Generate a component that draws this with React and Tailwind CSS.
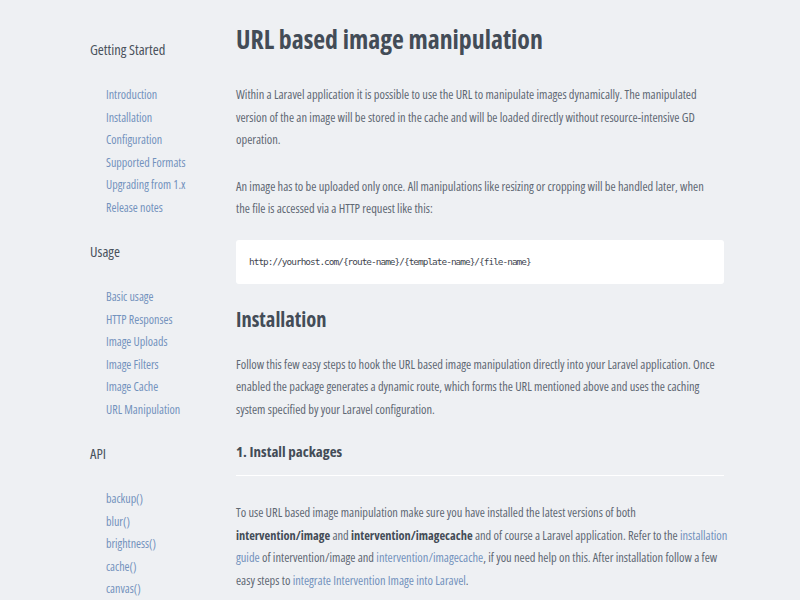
import React from "react";

const nav = [
  {
    title: "Getting Started",
    links: [
      "Introduction",
      "Installation",
      "Configuration",
      "Supported Formats",
      "Upgrading from 1.x",
      "Release notes"
    ]
  },
  {
    title: "Usage",
    links: [
      "Basic usage",
      "HTTP Responses",
      "Image Uploads",
      "Image Filters",
      "Image Cache",
      "URL Manipulation"
    ]
  },
  {
    title: "API",
    links: ["backup()", "blur()", "brightness()", "cache()", "canvas()"]
  }
];

function Link({ children }) {
  return <a className="text-[#7392bd]">{children}</a>;
}

export default function App() {
  return (
    <div
      className="h-[600px] overflow-hidden bg-[#eef0f3] text-[#5f6873] font-stretch-condensed"
      style={{ fontFamily: '"Open Sans", "Liberation Sans", sans-serif' }}
    >
      <div className="flex pl-[90px] pt-[37px]">
        {/* SIDEBAR */}
        <aside className="w-[146px] shrink-0">
          {nav.map((s) => (
            <div key={s.title} className="mb-[20px]">
              <h3 className="text-[14.5px] leading-[26px] text-[#4a525c]">{s.title}</h3>
              <ul className="mt-[21px] pl-[16px]">
                {s.links.map((l) => (
                  <li key={l} className="text-[12px] leading-[22.5px] text-[#7392bd]">
                    {l}
                  </li>
                ))}
              </ul>
            </div>
          ))}
        </aside>

        {/* CONTENT */}
        <main className="w-[488px] text-[12.4px] leading-[22.5px]">
          <h1 className="text-[25.8px] leading-[34px] font-bold text-[#434c57] -mt-[15px]">
            URL based image manipulation
          </h1>

          <p className="mt-[28px] w-[510px]">
            Within a Laravel application it is possible to use the URL to manipulate images
            dynamically. The manipulated
            <br />
            version of the an image will be stored in the cache and will be loaded directly without
            resource-intensive GD
            <br />
            operation.
          </p>
          <p className="mt-[24px] w-[510px]">
            An image has to be uploaded only once. All manipulations like resizing or cropping will
            be handled later, when
            <br />
            the file is accessed via a HTTP request like this:
          </p>

          <pre
            className="mt-[19px] bg-white rounded-[3px] px-[13px] py-[11px] text-[9.4px] tracking-[-0.95px] leading-[22px] text-[#3f4650]"
            style={{ fontFamily: '"DejaVu Sans Mono", "Liberation Mono", monospace' }}
          >
            http://yourhost.com/{"{route-name}"}/{"{template-name}"}/{"{file-name}"}
          </pre>

          <h2 className="mt-[20px] text-[20.5px] leading-[30px] font-bold text-[#434c57]">
            Installation
          </h2>
          <p className="mt-[20px] w-[510px]">
            Follow this few easy steps to hook the URL based image manipulation directly into your
            Laravel application. Once
            <br />
            enabled the package generates a dynamic route, which forms the URL mentioned above and
            uses the caching
            <br />
            system specified by your Laravel configuration.
          </p>

          <h3 className="mt-[18px] text-[15px] leading-[24px] font-bold text-[#434c57] pb-[12px] border-b border-white">
            1. Install packages
          </h3>
          <p className="mt-[26px] w-[510px]">
            To use URL based image manipulation make sure you have installed the latest versions of
            both
            <br />
            <b className="text-[#434c57]">intervention/image</b> and{" "}
            <b className="text-[#434c57]">intervention/imagecache</b> and of course a Laravel
            application. Refer to the <Link>installation</Link>
            <br />
            <Link>guide</Link> of intervention/image and <Link>intervention/imagecache</Link>, if
            you need help on this. After installation follow a few
            <br />
            easy steps to <Link>integrate Intervention Image into Laravel</Link>.
          </p>
        </main>
      </div>
    </div>
  );
}
